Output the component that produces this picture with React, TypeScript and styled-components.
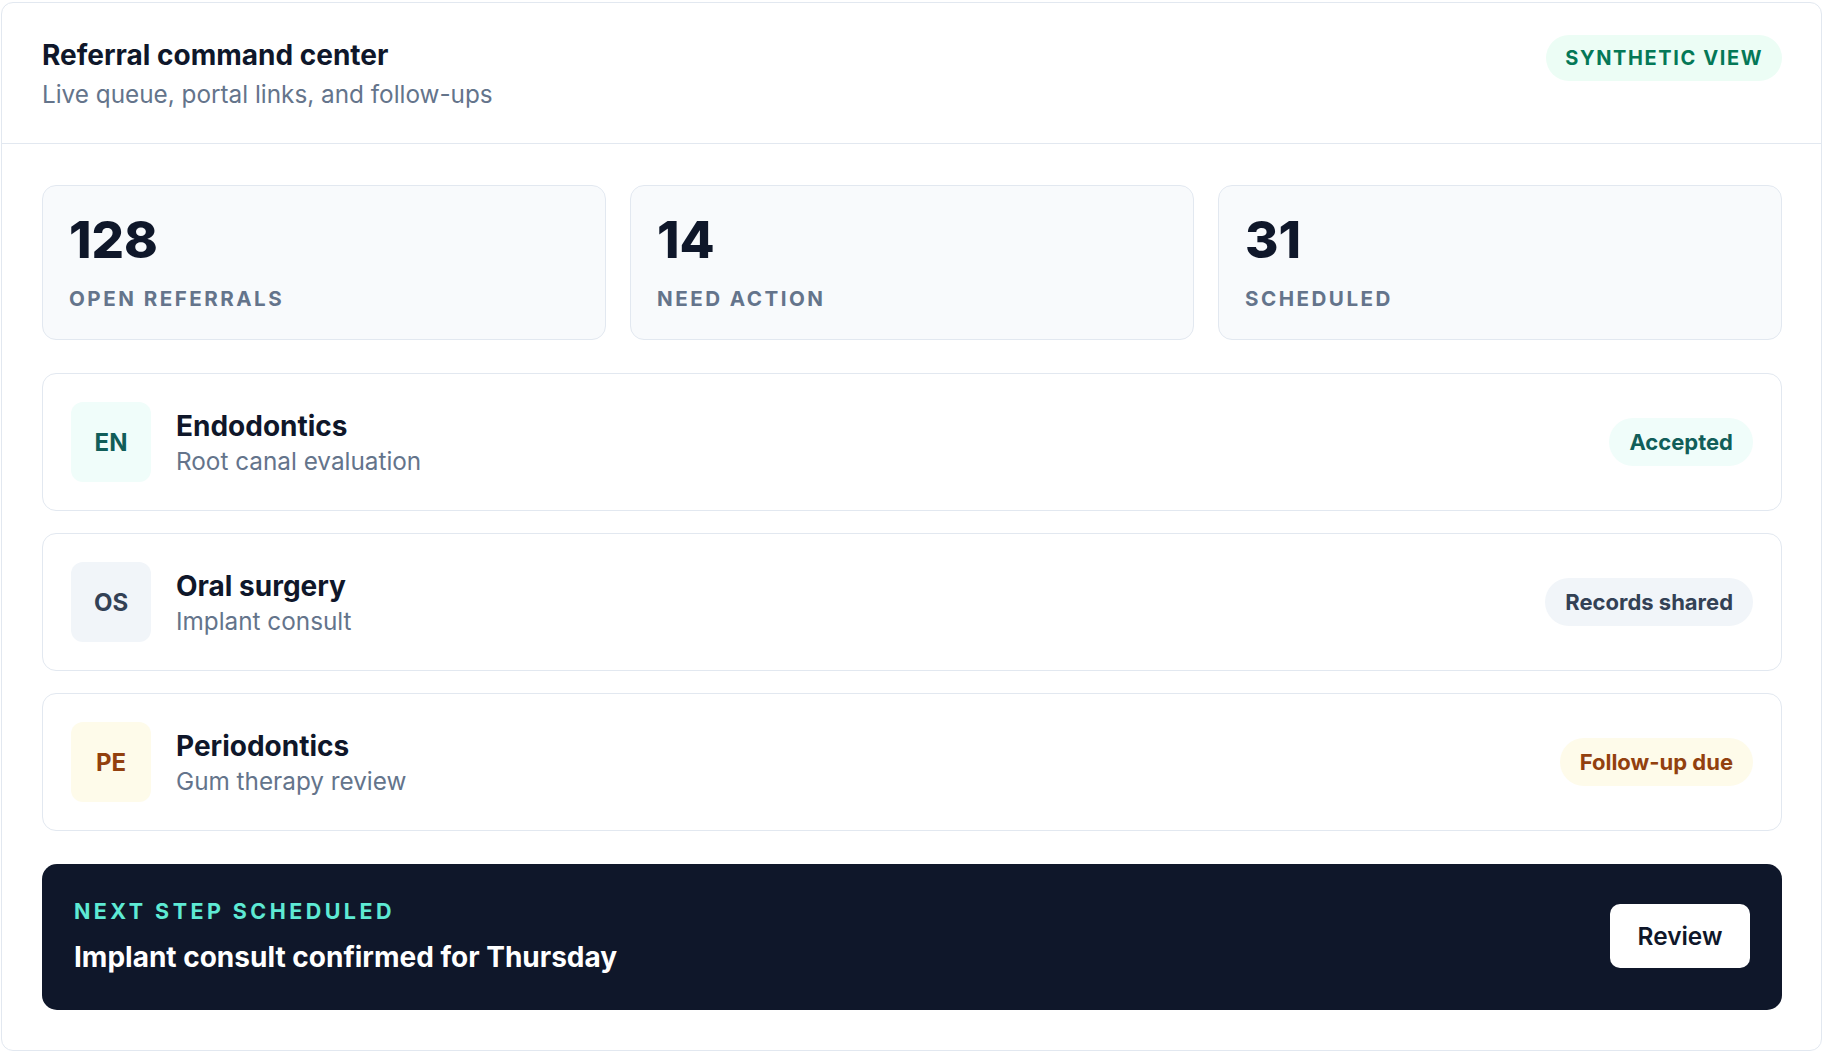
import React from "react";
import styled, { createGlobalStyle } from "styled-components";

const Global = createGlobalStyle`
  * { box-sizing: border-box; }
  html, body { margin: 0; padding: 0; background: #ffffff; }
  body { font-family: Inter, "Noto Sans", "Liberation Sans", sans-serif; -webkit-font-smoothing: antialiased; }
  #root { padding: 2px 2px 0 1px; }
`;

const Card = styled.div`
  background: #ffffff;
  border: 1px solid #e2e8f0;
  border-radius: 12px;
  overflow: hidden;
`;

const Header = styled.header`
  display: flex;
  justify-content: space-between;
  align-items: flex-start;
  padding: 32px 39px 32px 40px;
  border-bottom: 1px solid #e2e8f0;
`;

const TitleBlock = styled.div`
  display: flex;
  flex-direction: column;
  gap: 2px;
`;

const Title = styled.h1`
  margin: 0;
  font-size: 28px;
  line-height: 41px;
  font-weight: 700;
  color: #0f172a;
`;

const Subtitle = styled.p`
  margin: 0;
  font-size: 24.3px;
  line-height: 33px;
  font-weight: 400;
  color: #64748b;
`;

const Pill = styled.span`
  display: inline-flex;
  align-items: center;
  height: 46px;
  padding: 0 19px;
  border-radius: 999px;
  background: #ecfdf5;
  color: #047857;
  font-size: 20px;
  font-weight: 700;
  letter-spacing: 0.08em;
`;

const Body = styled.div`
  display: flex;
  flex-direction: column;
  gap: 33px;
  padding: 41px 39px 40px 40px;
`;

const StatGrid = styled.div`
  display: grid;
  grid-template-columns: repeat(3, 1fr);
  gap: 24px;
`;

const Stat = styled.div`
  display: flex;
  flex-direction: column;
  gap: 22px;
  padding: 28px 26px;
  background: #f8fafc;
  border: 1px solid #e2e8f0;
  border-radius: 14px;
`;

const StatValue = styled.div`
  font-size: 51px;
  line-height: 1;
  font-weight: 800;
  color: #0f172a;
`;

const StatLabel = styled.div`
  font-size: 20.6px;
  line-height: 24px;
  font-weight: 700;
  color: #64748b;
  letter-spacing: 0.12em;
  text-transform: uppercase;
`;

const List = styled.div`
  display: flex;
  flex-direction: column;
  gap: 22px;
`;

const Row = styled.div`
  display: flex;
  align-items: center;
  gap: 25px;
  padding: 28px;
  border: 1px solid #e2e8f0;
  border-radius: 14px;
  background: #ffffff;
`;

type Tone = "teal" | "slate" | "amber";

const tones: Record<Tone, { bg: string; fg: string }> = {
  teal: { bg: "#f0fdfa", fg: "#115e59" },
  slate: { bg: "#f1f5f9", fg: "#334155" },
  amber: { bg: "#fefbea", fg: "#92400e" },
};

const Avatar = styled.div<{ $tone: Tone }>`
  flex: none;
  width: 80px;
  height: 80px;
  border-radius: 12px;
  display: flex;
  align-items: center;
  justify-content: center;
  background: ${(p) => tones[p.$tone].bg};
  color: ${(p) => tones[p.$tone].fg};
  font-size: 24px;
  font-weight: 700;
`;

const RowText = styled.div`
  flex: 1;
  display: flex;
  flex-direction: column;
  gap: 2px;
`;

const RowTitle = styled.div`
  font-size: 28px;
  line-height: 35px;
  font-weight: 700;
  color: #0f172a;
`;

const RowSub = styled.div`
  font-size: 24.3px;
  line-height: 30px;
  font-weight: 400;
  color: #64748b;
`;

const Badge = styled.span<{ $tone: Tone }>`
  flex: none;
  display: inline-flex;
  align-items: center;
  height: 48px;
  padding: 0 20px;
  border-radius: 999px;
  background: ${(p) => tones[p.$tone].bg};
  color: ${(p) => tones[p.$tone].fg};
  font-size: 22px;
  font-weight: 700;
`;

const Footer = styled.div`
  display: flex;
  align-items: center;
  justify-content: space-between;
  padding: 33px 32px 35px 32px;
  background: #0f172a;
  border-radius: 15px;
`;

const FooterText = styled.div`
  display: flex;
  flex-direction: column;
  gap: 15px;
`;

const FooterLabel = styled.div`
  font-size: 21.5px;
  line-height: 28px;
  font-weight: 700;
  color: #5eead4;
  letter-spacing: 0.16em;
  text-transform: uppercase;
`;

const FooterTitle = styled.div`
  font-size: 28px;
  line-height: 35px;
  font-weight: 700;
  color: #ffffff;
`;

const Button = styled.button`
  flex: none;
  width: 140px;
  height: 64px;
  border: none;
  border-radius: 10px;
  background: #ffffff;
  color: #0f172a;
  font-family: inherit;
  font-size: 24.4px;
  font-weight: 600;
  cursor: pointer;
`;

const stats = [
  { value: "128", label: "Open referrals" },
  { value: "14", label: "Need action" },
  { value: "31", label: "Scheduled" },
];

const referrals: { code: string; title: string; sub: string; status: string; tone: Tone }[] = [
  { code: "EN", title: "Endodontics", sub: "Root canal evaluation", status: "Accepted", tone: "teal" },
  { code: "OS", title: "Oral surgery", sub: "Implant consult", status: "Records shared", tone: "slate" },
  { code: "PE", title: "Periodontics", sub: "Gum therapy review", status: "Follow-up due", tone: "amber" },
];

export default function App() {
  return (
    <>
      <Global />
      <Card>
        <Header>
          <TitleBlock>
            <Title>Referral command center</Title>
            <Subtitle>Live queue, portal links, and follow-ups</Subtitle>
          </TitleBlock>
          <Pill>SYNTHETIC VIEW</Pill>
        </Header>
        <Body>
          <StatGrid>
            {stats.map((s) => (
              <Stat key={s.label}>
                <StatValue>{s.value}</StatValue>
                <StatLabel>{s.label}</StatLabel>
              </Stat>
            ))}
          </StatGrid>
          <List>
            {referrals.map((r) => (
              <Row key={r.code}>
                <Avatar $tone={r.tone}>{r.code}</Avatar>
                <RowText>
                  <RowTitle>{r.title}</RowTitle>
                  <RowSub>{r.sub}</RowSub>
                </RowText>
                <Badge $tone={r.tone}>{r.status}</Badge>
              </Row>
            ))}
          </List>
          <Footer>
            <FooterText>
              <FooterLabel>Next step scheduled</FooterLabel>
              <FooterTitle>Implant consult confirmed for Thursday</FooterTitle>
            </FooterText>
            <Button>Review</Button>
          </Footer>
        </Body>
      </Card>
    </>
  );
}
